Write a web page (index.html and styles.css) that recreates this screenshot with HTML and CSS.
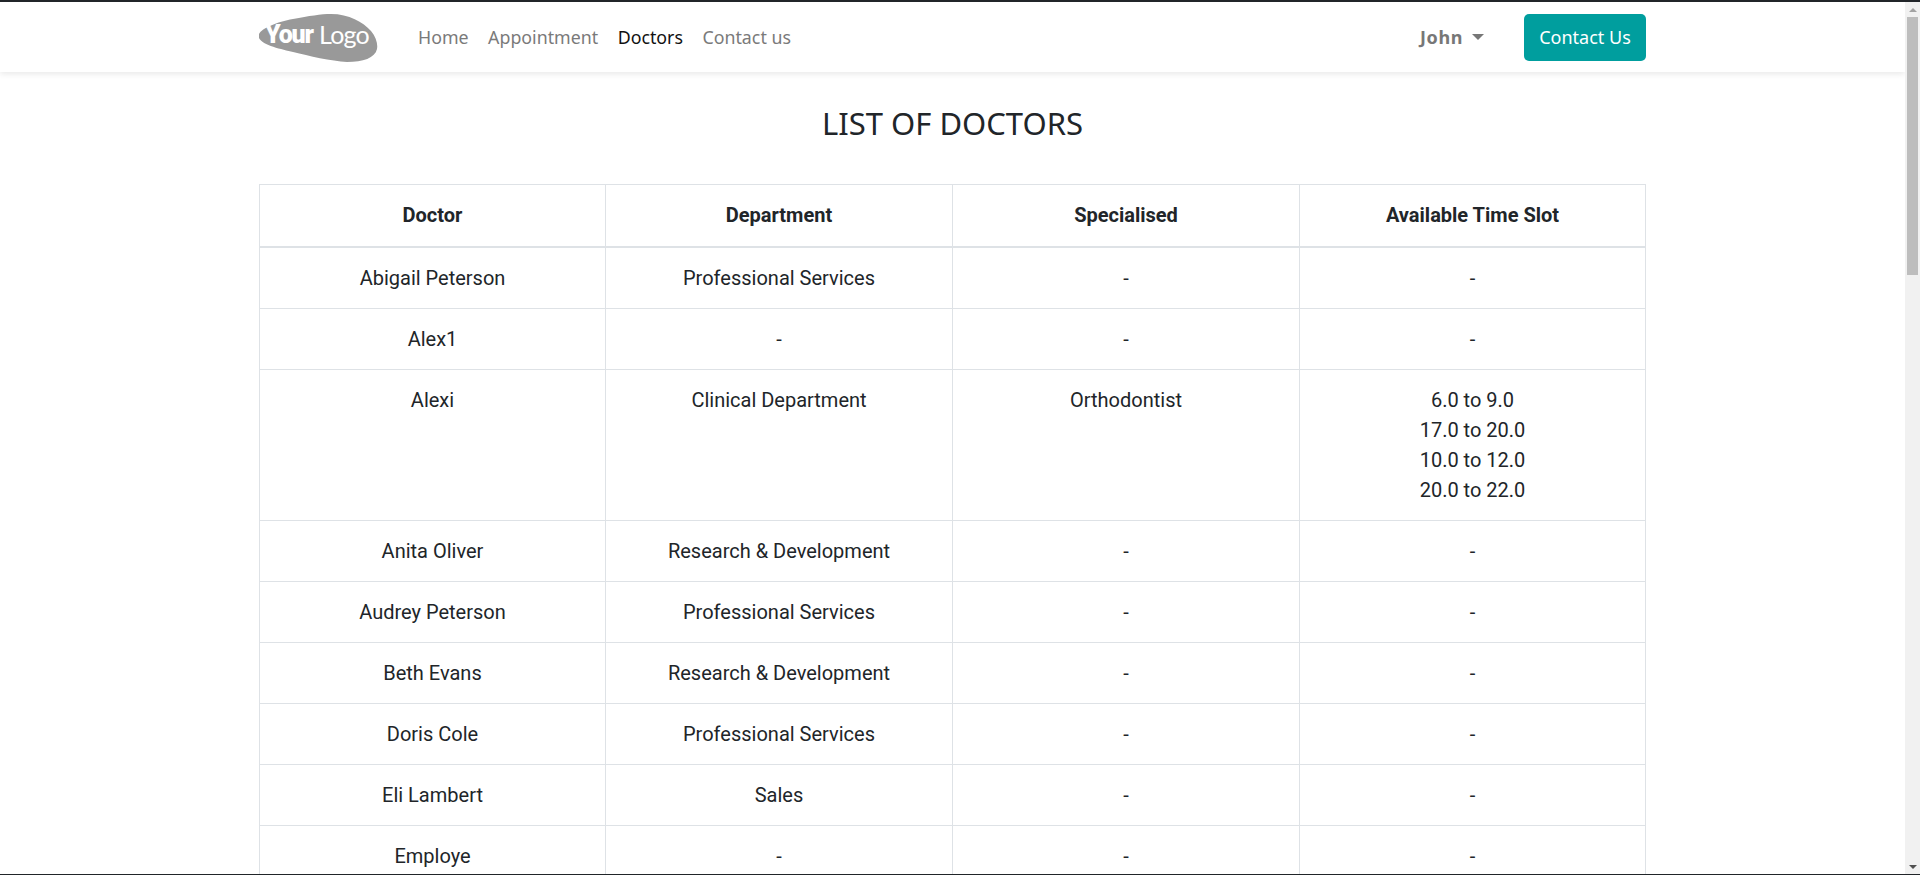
FILE: index.html
```html
<!DOCTYPE html>
<html lang="en">
<head>
<meta charset="utf-8">
<title>List of Doctors</title>
<link rel="stylesheet" href="styles.css">
</head>
<body>
<div class="frame">
  <div class="page">
    <header class="navbar">
      <div class="container nav-inner">
        <svg class="logo" viewBox="0 0 119 48" width="119" height="48" role="img" aria-label="Your Logo">
          <path class="logo-blob" d="M0 20 C3 14 18 8 34 5 C50 2 62 0 72 0 C90 0 104 8 112 17 C117 23 119 30 118 35 C116 44 104 48 88 48 C72 47 50 42 34 38 C22 35 -4 30 0 20 Z"/>
          <text class="logo-your" x="6" y="29">Your</text>
          <text class="logo-logo" x="60" y="30">Logo</text>
        </svg>
        <nav class="nav-links">
          <a class="nav-link" href="#">Home</a>
          <a class="nav-link" href="#">Appointment</a>
          <a class="nav-link active" href="#">Doctors</a>
          <a class="nav-link" href="#">Contact us</a>
        </nav>
        <div class="user"><span>John</span><i class="caret"></i></div>
        <a class="btn" href="#">Contact Us</a>
      </div>
    </header>
    <main class="container">
      <h1 class="title">LIST OF DOCTORS</h1>
      <table class="doctors">
        <thead>
          <tr><th class="col-a">Doctor</th><th class="col-b">Department</th><th class="col-c">Specialised</th><th>Available Time Slot</th></tr>
        </thead>
        <tbody>
          <tr><td>Abigail Peterson</td><td>Professional Services</td><td>-</td><td>-</td></tr>
          <tr><td>Alex1</td><td>-</td><td>-</td><td>-</td></tr>
          <tr><td>Alexi</td><td>Clinical Department</td><td>Orthodontist</td><td>6.0 to 9.0<br>17.0 to 20.0<br>10.0 to 12.0<br>20.0 to 22.0</td></tr>
          <tr><td>Anita Oliver</td><td>Research &amp; Development</td><td>-</td><td>-</td></tr>
          <tr><td>Audrey Peterson</td><td>Professional Services</td><td>-</td><td>-</td></tr>
          <tr><td>Beth Evans</td><td>Research &amp; Development</td><td>-</td><td>-</td></tr>
          <tr><td>Doris Cole</td><td>Professional Services</td><td>-</td><td>-</td></tr>
          <tr><td>Eli Lambert</td><td>Sales</td><td>-</td><td>-</td></tr>
          <tr><td>Employe</td><td>-</td><td>-</td><td>-</td></tr>
        </tbody>
      </table>
    </main>
  </div>
  <div class="scrollbar">
    <i class="arrow up"></i>
    <div class="track"><div class="thumb"></div></div>
    <i class="arrow down"></i>
  </div>
</div>
</body>
</html>
```
FILE: styles.css
```css
* { box-sizing: border-box; }
html, body { height: 100%; margin: 0; }
body { background: #fff; overflow: hidden; color: #212529; font-family: Roboto, sans-serif; }
.frame { display: flex; height: 875px; border-top: 2px solid #212529; border-bottom: 1px solid #212529; }
.page { flex: 1; min-width: 0; overflow: hidden; }
.container { width: 1387px; margin-left: 259px; }
.navbar { height: 70px; background: #fff; box-shadow: 0 2px 6px rgba(0,0,0,.09); }
.nav-inner { display: flex; align-items: center; height: 100%; }
.logo { display: block; margin-top: 2px; flex: none; }
.logo-blob { fill: #999; }
.logo-your { fill: #fff; font-family: Roboto, sans-serif; font-weight: 900; font-size: 25px; letter-spacing: -1.2px; }
.logo-logo { fill: #fff; font-family: Lato, sans-serif; font-weight: 400; font-size: 25px; letter-spacing: -.8px; }
.nav-links { display: flex; margin-left: 40px; gap: 19.5px; font-family: "Noto Sans", sans-serif; font-size: 17.8px; }
.nav-link { color: #7a7a7a; text-decoration: none; }
.nav-link.active { color: #111; }
.user { margin-left: auto; display: flex; align-items: center; gap: 9px; color: #777; font-family: "Noto Sans", sans-serif; font-weight: 700; font-size: 18px; letter-spacing: .6px; }
.caret { width: 0; height: 0; border-left: 6px solid transparent; border-right: 6px solid transparent; border-top: 6px solid #777; }
.btn { margin-left: 40px; width: 122px; height: 47px; display: flex; align-items: center; justify-content: center; background: #009e9e; color: #fff; border-radius: 5px; text-decoration: none; font-family: "Noto Sans", sans-serif; font-size: 18px; }
.title { margin: 31px 0 41px; height: 40px; line-height: 40px; text-align: center; font-family: "Noto Sans", sans-serif; font-weight: 400; font-size: 31px; color: #212529; }
.doctors { width: 1387px; table-layout: fixed; border-collapse: collapse; font-size: 20px; line-height: 30px; }
.doctors th, .doctors td { border: 1px solid #dee2e6; padding: 15px; text-align: center; vertical-align: top; }
.doctors th { font-weight: 700; border-bottom-width: 2px; padding-bottom: 16px; }
.doctors .col-a { width: 346px; }
.doctors .col-b { width: 347px; }
.doctors .col-c { width: 347px; }
.scrollbar { flex: none; width: 15px; display: flex; flex-direction: column; background: #f1f1f1; }
.arrow { flex: none; height: 15px; display: flex; align-items: center; justify-content: center; }
.arrow::before { content: ""; border-left: 4px solid transparent; border-right: 4px solid transparent; }
.up::before { border-bottom: 4px solid #a3a3a3; }
.down::before { border-top: 4px solid #505050; }
.track { flex: 1; display: flex; flex-direction: column; }
.thumb { height: 258px; margin: 0 2px; background: #bdbdbd; }
```
